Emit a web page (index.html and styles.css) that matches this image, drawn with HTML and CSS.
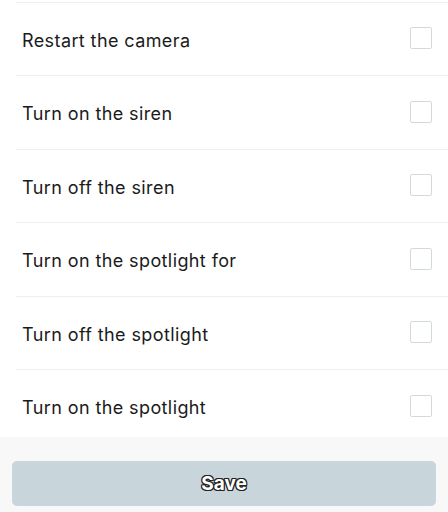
FILE: index.html
```html
<!DOCTYPE html>
<html lang="en">
<head>
    <meta charset="UTF-8">
    <meta name="viewport" content="width=device-width, initial-scale=1.0">
    <title>Actions</title>
    <link rel="stylesheet" href="styles.css">
</head>
<body>

    <div class="page">
        <ul class="action-list">
            <li class="action-row">
                <span class="action-label">Restart the camera</span>
                <span class="check-box"></span>
            </li>
            <li class="action-row">
                <span class="action-label">Turn on the siren</span>
                <span class="check-box"></span>
            </li>
            <li class="action-row">
                <span class="action-label">Turn off the siren</span>
                <span class="check-box"></span>
            </li>
            <li class="action-row">
                <span class="action-label">Turn on the spotlight for</span>
                <span class="check-box"></span>
            </li>
            <li class="action-row">
                <span class="action-label">Turn off the spotlight</span>
                <span class="check-box"></span>
            </li>
            <li class="action-row">
                <span class="action-label">Turn on the spotlight</span>
                <span class="check-box"></span>
            </li>
        </ul>

        <div class="footer">
            <button class="save-btn">Save</button>
        </div>
    </div>

</body>
</html>
```
FILE: styles.css
```css
body {
    font-family: 'Inter', sans-serif;
    margin: 0;
    padding: 0;
    background: #fff;
}

.page {
    display: flex;
    flex-direction: column;
    height: 512px;
}

.action-list {
    list-style: none;
    margin: 0;
    padding: 1.5px 0 0 16px;
    height: 436px;
    overflow: hidden;
}

.action-row {
    display: flex;
    align-items: center;
    justify-content: space-between;
    height: 73.5px;
    box-sizing: border-box;
    border-top: 1px solid #eeeeee;
    padding: 0 16px 0 6px;
}

.action-label {
    font-size: 18px;
    letter-spacing: 0.4px;
    color: #1b1b1b;
    padding-top: 3px;
}

.check-box {
    width: 22px;
    height: 22px;
    box-sizing: border-box;
    border: 1.5px solid #d3dadd;
    border-radius: 2px;
    margin-top: -1px;
}

.footer {
    flex: 1;
    background: #f8f8f8;
    padding: 24px 12px 6px;
}

.save-btn {
    width: 100%;
    height: 45px;
    border: none;
    border-radius: 5px;
    background: #c8d5da;
    font-family: 'Inter', sans-serif;
    font-size: 19px;
    font-weight: bold;
    color: #fff;
    text-shadow: 1px 0 0 #222, -1px 0 0 #222, 0 1px 0 #222, 0 -1px 0 #222,
                 1px 1px 0 #222, -1px -1px 0 #222, 1px -1px 0 #222, -1px 1px 0 #222;
}
```
